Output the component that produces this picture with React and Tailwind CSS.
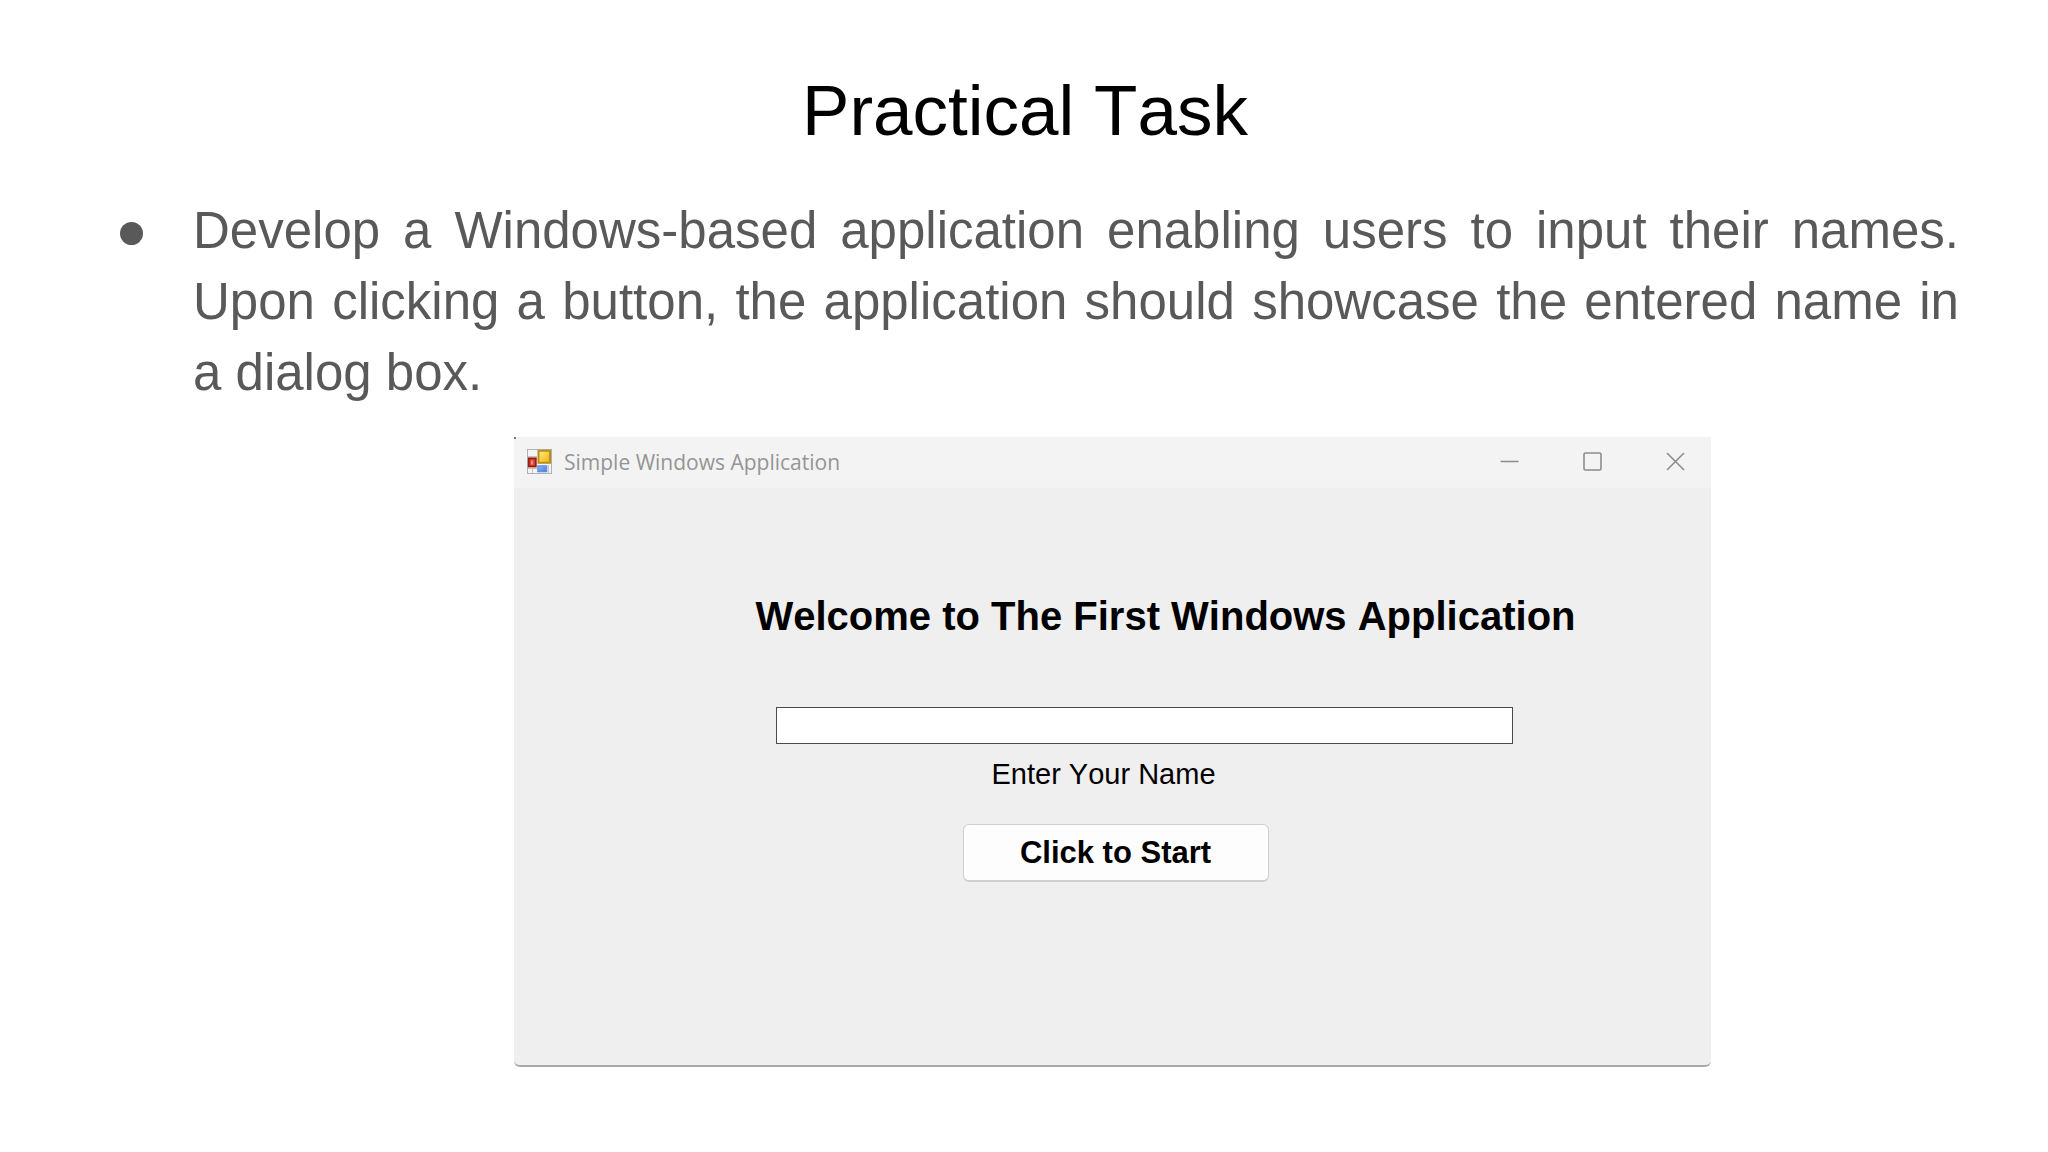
const FormIcon = () => {
  return (
    <svg width="25" height="25" viewBox="0 0 25 25" aria-hidden="true">
      <defs>
        <linearGradient id="yellow" x1="0" y1="0" x2="1" y2="1">
          <stop offset="0" stopColor="#fff0a0" />
          <stop offset="0.5" stopColor="#f8d040" />
          <stop offset="1" stopColor="#efb010" />
        </linearGradient>
        <linearGradient id="blue" x1="0" y1="0" x2="1" y2="1">
          <stop offset="0" stopColor="#8fb8fa" />
          <stop offset="1" stopColor="#3f78e0" />
        </linearGradient>
      </defs>
      <rect x="0.5" y="0.5" width="24" height="24" fill="#f4f4f4" stroke="#b0b0b0" />
      <path d="M5.5 19v5M1 19.5h9M21.5 16v8M1 7.5h9" stroke="#c4c4c4" fill="none" />
      <rect x="11.5" y="1.8" width="11.5" height="12" fill="url(#yellow)" stroke="#b8901c" strokeWidth="2" />
      <rect x="1.8" y="9.3" width="7" height="8.2" fill="#d8483a" stroke="#9c1c12" strokeWidth="1.8" />
      <path d="M5 11.5v4" stroke="#f0a090" strokeWidth="1.6" />
      <rect x="10.8" y="16.8" width="9" height="6" fill="url(#blue)" stroke="#5a88dc" />
    </svg>
  );
};

const WindowButton = ({ label, children }) => {
  return (
    <button type="button" aria-label={label}>
      <svg width="19" height="19" viewBox="0 0 19 19" fill="none" stroke="#8c8c8c" strokeWidth="1.6">
        {children}
      </svg>
    </button>
  );
};

const TitleBar = () => {
  return (
    <div className="flex h-[51px] items-center bg-[#f3f3f3] pr-[26px] pb-0.5 pl-[13px]">
      <FormIcon />
      <span className="ml-3 font-['Open_Sans',sans-serif] text-[21px] leading-7 text-[#959595]">
        Simple Windows Application
      </span>
      <div className="ml-auto flex gap-16">
        <WindowButton label="Minimize">
          <path d="M0.5 9.5h18" />
        </WindowButton>
        <WindowButton label="Maximize">
          <rect x="1" y="1" width="17" height="17" rx="1.5" />
        </WindowButton>
        <WindowButton label="Close">
          <path d="M1 1l17 17M18 1L1 18" />
        </WindowButton>
      </div>
    </div>
  );
};

const AppWindow = () => {
  return (
    <section className="relative mt-[29px] mr-[337px] ml-[514px] overflow-hidden rounded-b-md border-b-2 border-[#a9a9a9] bg-[#efefef]">
      <span className="absolute top-0 left-0 size-0.5 bg-[#777777]" />
      <TitleBar />
      <form className="flex flex-col items-center pt-[104px] pb-[183px] text-black">
        <h2 className="pl-[106px] text-[40px] leading-12 font-bold whitespace-nowrap">
          Welcome to The First Windows Application
        </h2>
        <div className="mt-[67px] w-full pr-[198px] pl-[262px]">
          <input
            id="name"
            type="text"
            className="block h-[37px] w-full border border-[#4a4a4a] bg-white px-2 text-2xl outline-none"
          />
        </div>
        <label htmlFor="name" className="mt-3 pr-[18px] text-[29px] leading-9">
          Enter Your Name
        </label>
        <button
          type="button"
          className="mt-8 ml-1.5 h-[58px] w-[306px] rounded-md border border-b-2 border-[#d0d0d0] bg-[#fdfdfd] text-[31px] leading-9 font-bold"
        >
          Click to Start
        </button>
      </form>
    </section>
  );
};

const App = () => {
  return (
    <main className="min-h-screen bg-white pt-[71px] font-['Liberation_Sans',Arial,sans-serif] [font-kerning:none]">
      <h1 className="pl-0.5 text-center text-[71px] leading-[80px] text-black">Practical Task</h1>
      <ul className="mt-11 pr-[89px] pl-[120px] text-[51px] leading-[71px] text-[#595959]">
        <li className="flex">
          <span className="mt-[27px] mr-[50px] size-[23px] shrink-0 rounded-full bg-[#595959]" />
          <p className="text-justify">
            Develop a Windows-based application enabling users to input their names. Upon clicking a
            button, the application should showcase the entered name in a dialog box.
          </p>
        </li>
      </ul>
      <AppWindow />
    </main>
  );
};

export default App;
